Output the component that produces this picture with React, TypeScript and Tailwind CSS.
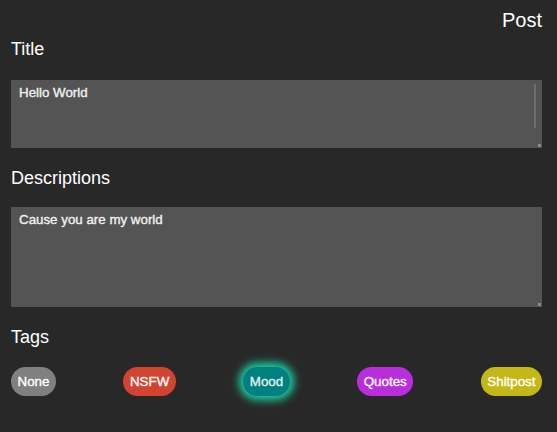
import React from "react";

interface Tag {
  name: string;
  className: string;
}

const tags: Tag[] = [
  { name: "None", className: "bg-[#808080] text-white" },
  { name: "NSFW", className: "bg-[#d24430] text-white" },
  {
    name: "Mood",
    className:
      "bg-[#008080] text-[#e0f2f1] shadow-[0_0_8px_4px_#1ad8a8]",
  },
  { name: "Quotes", className: "bg-[#b92ddd] text-white" },
  { name: "Shitpost", className: "bg-[#c4b817] text-white" },
];

const Field: React.FC<{ value: string; height: string; scroll?: boolean }> = ({
  value,
  height,
  scroll,
}) => (
  <div className="relative">
    <textarea
      readOnly
      value={value}
      className={`block w-full ${height} resize-none bg-[#545454] text-[#f2f2f2] text-[13.33px] pt-[3px] px-2 outline-none [-webkit-text-stroke:0.35px_#f2f2f2]`}
    />
    {scroll && (
      <div className="absolute right-[6px] top-[4px] h-[44px] w-[2px] bg-[#6e6e6e]" />
    )}
    <div className="absolute right-[1px] bottom-[1px] h-[3px] w-[3px] bg-[#8a8a8a]" />
  </div>
);

export default function App() {
  return (
    <div
      className="min-h-screen bg-[#282828] text-white pl-[11px] pr-[15px]"
      style={{ fontFamily: '"Liberation Sans", Arial, sans-serif' }}
    >
      <div className="flex justify-end pt-[9px]">
        <span className="text-[20px] leading-[22px]">Post</span>
      </div>
      <h2 className="mt-[8px] text-[18px] leading-[20px]">Title</h2>
      <div className="mt-[21px]">
        <Field value="Hello World" height="h-[68px]" scroll />
      </div>
      <h2 className="mt-[20px] text-[18px] leading-[20px]">Descriptions</h2>
      <div className="mt-[19px]">
        <Field value="Cause you are my world" height="h-[100px]" />
      </div>
      <h2 className="mt-[20px] text-[18px] leading-[20px]">Tags</h2>
      <div className="mt-[20px] flex justify-between">
        {tags.map((tag) => (
          <span
            key={tag.name}
            className={`h-[29px] flex items-center rounded-full px-[6.5px] text-[13.33px] [-webkit-text-stroke:0.35px_currentColor] ${tag.className}`}
          >
            {tag.name}
          </span>
        ))}
      </div>
    </div>
  );
}
